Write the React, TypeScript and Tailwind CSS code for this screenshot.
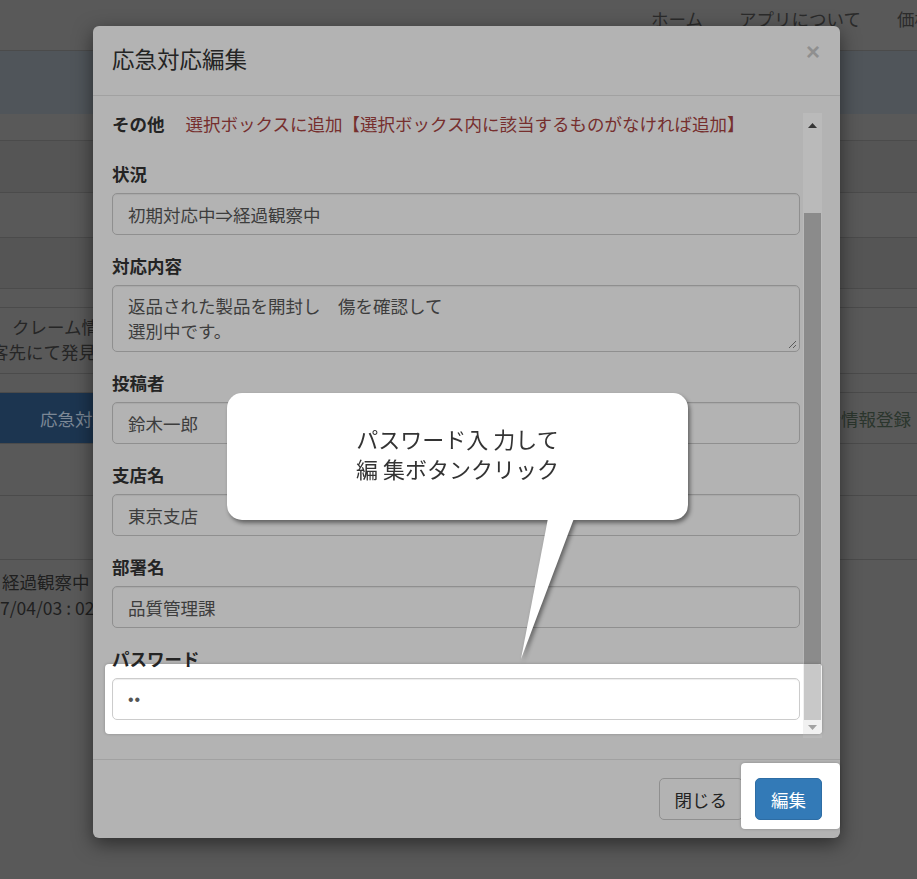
import React from "react"

const rowLine = "border-b border-[#4b4b4b]"

type FieldProps = {
  label: string
  value: string
}

function Field({ label, value }: FieldProps) {
  return (
    <div className="mb-[18px]">
      <div className="mb-[7px] font-bold">{label}</div>
      <div className="h-[42px] rounded-[5px] border border-[#8f8f8f] px-[15px] flex items-center text-[#3d3d3d] shadow-[inset_0_1px_1px_rgba(0,0,0,0.06)]">
        {value}
      </div>
    </div>
  )
}

function BackgroundPage() {
  return (
    <div className="flex flex-col text-[17.5px] leading-[25px] whitespace-nowrap">
      <div className={`h-[51px] ${rowLine} flex pl-[633px] pt-[6px] text-[#2b2b2b]`}>
        <span className="px-[18px]">ホーム</span>
        <span className="px-[18px]">アプリについて</span>
        <span className="px-[18px]">価格</span>
      </div>
      <div className="h-[63px] bg-[#50555a]" />
      <div className={`h-[27px] ${rowLine}`} />
      <div className={`h-[52px] bg-[#555555] ${rowLine}`} />
      <div className={`h-[45px] ${rowLine}`} />
      <div className={`h-[51px] bg-[#555555] ${rowLine}`} />
      <div className={`h-[19px] ${rowLine}`} />
      <div className={`h-[66px] ${rowLine} pt-[6px] text-[#262626]`}>
        <div className="pl-[12px]">クレーム情報</div>
        <div className="-ml-[9px]">客先にて発見</div>
      </div>
      <div className={`h-[19px] ${rowLine}`} />
      <div className={`h-[51px] ${rowLine} flex items-center justify-between`}>
        <div className="h-full w-[300px] bg-[#1c3550] pl-[40px] flex items-center text-[#7c8896]">
          応急対応登録
        </div>
        <div className="pr-[6px] text-[#2b362d]">対応者情報登録</div>
      </div>
      <div className={`h-[52px] ${rowLine}`} />
      <div className={`h-[64px] ${rowLine}`} />
      <div className="pt-[9px] leading-[26px] text-[#1f1f1f]">
        <div className="pl-[2px]">経過観察中</div>
        <div>7/04/03 : 02:15</div>
      </div>
    </div>
  )
}

function Scrollbar() {
  return (
    <div className="w-[19px] flex flex-col bg-[#bababa]">
      <div className="h-[24px] flex items-center justify-center">
        <svg width="9" height="5" viewBox="0 0 9 5">
          <path d="M0 5 L4.5 0 L9 5 Z" fill="#353535" />
        </svg>
      </div>
      <div className="h-[76px]" />
      <div className="h-[451px] mx-[1px] bg-[#8b8b8b]" />
      <div className="h-[56px] mx-[1px] bg-[#8b8b8b]" />
      <div className="h-[18px]" />
    </div>
  )
}

export default function App() {
  return (
    <div className="relative w-[917px] h-[879px] overflow-hidden bg-[#595959] font-['Noto_Sans_CJK_JP','Noto_Sans',sans-serif]">
      <BackgroundPage />

      {/* modal */}
      <div className="absolute left-[93px] top-[26px] w-[747px] rounded-[6px] bg-[#b3b3b3] shadow-[0_6px_19px_rgba(0,0,0,0.5)] text-[17.5px] leading-[25px] text-[#242424]">
        <div className="h-[70px] border-b border-[#a1a1a1] flex items-start justify-between pl-[19px] pr-[20px] pt-[19px]">
          <h4 className="text-[22.5px] leading-[26px] font-normal">応急対応編集</h4>
          <span className="mt-[-6px] font-['Liberation_Sans',sans-serif] text-[24px] leading-[26px] font-bold text-[#8f8f8f]">×</span>
        </div>

        <div className="h-[663px] pt-[17px] pl-[12px] pr-[18px]">
          <div className="h-[625px] flex">
            <div className="flex-1 overflow-hidden pl-[7px] pr-[3px]">
              <div className="-mt-[2px]">
                <div className="flex mb-[25px] whitespace-nowrap">
                  <span className="font-bold">その他</span>
                  <span className="ml-[21px] text-[#762f2e]">
                    選択ボックスに追加【選択ボックス内に該当するものがなければ追加】
                  </span>
                </div>

                <Field label="状況" value="初期対応中⇒経過観察中" />

                <div className="mb-[18px]">
                  <div className="mb-[7px] font-bold">対応内容</div>
                  <div className="relative h-[67px] rounded-[5px] border border-[#8f8f8f] px-[15px] py-[7px] text-[#3d3d3d] shadow-[inset_0_1px_1px_rgba(0,0,0,0.06)]">
                    <div>返品された製品を開封し　傷を確認して</div>
                    <div>選別中です。</div>
                    <svg className="absolute right-[2px] bottom-[2px]" width="9" height="9" viewBox="0 0 9 9">
                      <path d="M8 1 L1 8 M8 5 L5 8" stroke="#5a5a5a" strokeWidth="1" />
                    </svg>
                  </div>
                </div>

                <Field label="投稿者" value="鈴木一郎" />
                <Field label="支店名" value="東京支店" />
                <Field label="部署名" value="品質管理課" />

                <div>
                  <div className="relative z-20 mb-[7px] font-bold">パスワード</div>
                  <div className="relative z-20 h-[42px] rounded-[5px] border border-[#cccccc] bg-white px-[15px] flex items-center text-[#555555] shadow-[inset_0_1px_1px_rgba(0,0,0,0.075)]">
                    <span className="font-['Liberation_Sans',sans-serif] text-[16px] tracking-[1px]">••</span>
                  </div>
                </div>
              </div>
            </div>
            <Scrollbar />
          </div>
        </div>

        <div className="border-t border-[#a1a1a1] pt-[18px] pb-[18px] pr-[18px] flex justify-end gap-[12px]">
          <button className="h-[42px] rounded-[5px] border border-[#8f8f8f] bg-[#b3b3b3] px-[15px] text-[#242424]">
            閉じる
          </button>
          <button className="relative z-20 h-[42px] rounded-[5px] border border-[#2e6da4] bg-[#337ab7] px-[15px] text-white">
            編集
          </button>
        </div>
      </div>

      {/* tour highlight: password */}
      <div className="absolute left-[105px] top-[664px] z-10 w-[717px] h-[70px] rounded-[4px] bg-white shadow-[0_0_3px_rgba(0,0,0,0.25)] flex justify-end overflow-hidden">
        <div className="w-[19px] flex flex-col bg-[#f1f1f1]">
          <div className="h-[56px] mx-[1px] bg-[#c8c8c8]" />
          <div className="h-[14px] flex items-center justify-center">
            <svg width="9" height="5" viewBox="0 0 9 5">
              <path d="M0 0 L9 0 L4.5 5 Z" fill="#a3a3a3" />
            </svg>
          </div>
        </div>
      </div>

      {/* tour highlight: edit button */}
      <div className="absolute left-[741px] top-[763px] z-10 w-[99px] h-[66px] rounded-[4px] bg-white shadow-[0_0_3px_rgba(0,0,0,0.25)]" />

      {/* callout */}
      <div className="absolute left-[227px] top-[393px] z-30 w-[461px] h-[127px] drop-shadow-[2px_3px_2px_rgba(0,0,0,0.45)]">
        <svg className="absolute left-0 top-0 overflow-visible" width="461" height="280">
          <polygon points="322,120 349,120 294,266" fill="#ffffff" />
        </svg>
        <div className="relative h-full rounded-[15px] bg-white pt-[30px] text-center text-[22px] leading-[30px] font-normal text-[#333333] whitespace-nowrap">
          <div>パスワード入 力して</div>
          <div>編 集ボタンクリック</div>
        </div>
      </div>
    </div>
  )
}
